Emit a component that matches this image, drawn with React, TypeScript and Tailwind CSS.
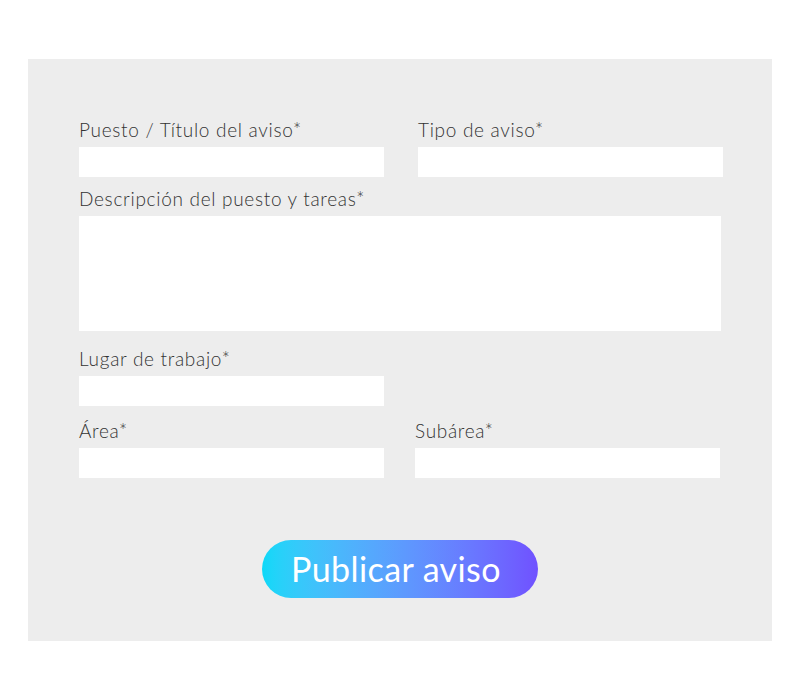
import React from "react";

const labelCls =
  "block h-[24px] leading-[24px] mb-[5px] text-[19px] font-light tracking-[0.7px] text-[#333333] whitespace-nowrap";
const inputCls = "block w-[305px] h-[30px] bg-white border-0 outline-none";

function Field({ label, className = "" }: { label: string; className?: string }) {
  return (
    <div className={"w-[305px] " + className}>
      <label className={labelCls}>{label}</label>
      <input type="text" className={inputCls} />
    </div>
  );
}

export default function App() {
  return (
    <div
      className="w-[800px] h-[700px] bg-white pt-[59px] pl-[28px]"
      style={{ fontFamily: "Lato, 'Noto Sans', sans-serif" }}
    >
      <div className="w-[744px] h-[582px] bg-[#ededed] pt-[59px] pl-[51px]">
        <div className="flex gap-[34px]">
          <Field label="Puesto / Título del aviso*" />
          <Field label="Tipo de aviso*" />
        </div>
        <div className="mt-[10px]">
          <label className={labelCls}>Descripción del puesto y tareas*</label>
          <textarea className="block w-[642px] h-[115px] bg-white border-0 outline-none resize-none" />
        </div>
        <div className="mt-[16px]">
          <Field label="Lugar de trabajo*" />
        </div>
        <div className="mt-[13px] flex gap-[31px]">
          <Field label="Área*" />
          <Field label="Subárea*" />
        </div>
        <div className="mt-[62px] w-[642px] flex justify-center">
          <button
            type="button"
            className="w-[276px] h-[58px] pr-[8px] rounded-full bg-gradient-to-r from-[#0ad9f8] to-[#7051ff] text-white text-[34px] font-normal tracking-[0.4px] leading-none"
          >
            Publicar aviso
          </button>
        </div>
      </div>
    </div>
  );
}
